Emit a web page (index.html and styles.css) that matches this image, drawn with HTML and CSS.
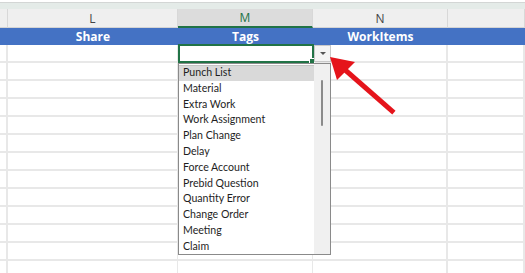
FILE: index.html
```html
<html>
  <head>
    <link rel="stylesheet" href="styles.css">
    <title>Tags dropdown</title>
  </head>
  <body>
    <div class="sheet">
      <div class="ribbon-edge"></div>

      <div class="row colheads">
        <div class="cell corner"></div>
        <div class="cell">L</div>
        <div class="cell active">M</div>
        <div class="cell">N</div>
        <div class="cell"></div>
      </div>

      <div class="row titles">
        <div class="cell"></div>
        <div class="cell">Share</div>
        <div class="cell">Tags</div>
        <div class="cell">WorkItems</div>
        <div class="cell"></div>
      </div>

      <div id="rows"></div>

      <!-- things that float over the grid -->
      <div class="selected"><span class="handle"></span></div>
      <div class="dd-button"><span class="caret"></span></div>

      <div class="dd-list">
        <ul>
          <li class="hover">Punch List</li>
          <li>Material</li>
          <li>Extra Work</li>
          <li>Work Assignment</li>
          <li>Plan Change</li>
          <li>Delay</li>
          <li>Force Account</li>
          <li>Prebid Question</li>
          <li>Quantity Error</li>
          <li>Change Order</li>
          <li>Meeting</li>
          <li>Claim</li>
        </ul>
        <div class="scroll"><span class="thumb"></span></div>
      </div>

      <svg class="pointer" width="80" height="70" viewBox="0 0 80 70">
        <line x1="14" y1="14" x2="62" y2="56" stroke="#e5141b" stroke-width="5" stroke-linecap="square"/>
        <polygon points="0,2 25,7 7,25" fill="#e5141b"/>
      </svg>
    </div>

    <script>
      const rows = document.querySelector('#rows');
      for (let i = 0; i < 13; i++) {
        const row = document.createElement('div');
        row.className = 'row data';
        for (let c = 0; c < 5; c++) {
          const cell = document.createElement('div');
          cell.className = 'cell';
          row.appendChild(cell);
        }
        rows.appendChild(row);
      }
    </script>
  </body>
</html>
```

FILE: styles.css
```css
body {
  margin: 0;
  font-family: "Open Sans", "Noto Sans", sans-serif;
  background: #fff;
  overflow: hidden;
}

.sheet {
  position: relative;
  width: 525px;
  height: 273px;
  overflow: hidden;
}

.ribbon-edge {
  height: 9px;
  box-sizing: border-box;
  border-top: 2px solid #fff;
  background: #e4ebe8;
  box-shadow: inset 0 1px 0 #d3d6d5;
}

.row {
  display: grid;
  grid-template-columns: 8px 170px 135px 135px 77px;
  height: 18px;
}

.cell {
  box-sizing: border-box;
  display: flex;
  align-items: center;
  justify-content: center;
}

.colheads {
  background: #efefef;
  font-size: 12px;
  color: #444;
}
.colheads .cell {
  border-right: 1px solid #d8d8d8;
  border-bottom: 1px solid #d4d4d4;
}
.colheads .cell.active {
  background: #dcdcdc;
  color: #217346;
  border-bottom: 2px solid #217346;
}

.titles {
  background: #4472c4;
  color: #fff;
  font-weight: bold;
  font-size: 12px;
}

.data .cell {
  border-bottom: 2px solid #e8e8e8;
  border-right: 2px solid #e8e8e8;
}
.data .cell:nth-child(2),
.data .cell:nth-child(3) {
  border-right-width: 1px;
}

.selected {
  position: absolute;
  left: 178px;
  top: 44px;
  width: 136px;
  height: 19px;
  box-sizing: border-box;
  border: 2px solid #217346;
  background: #fff;
}
.handle {
  position: absolute;
  right: -3px;
  bottom: -3px;
  width: 4px;
  height: 4px;
  background: #217346;
  border: 1px solid #fff;
}

.dd-button {
  position: absolute;
  left: 314px;
  top: 45px;
  width: 17px;
  height: 17px;
  box-sizing: border-box;
  border: 1px solid #c9c9c9;
  background: #f4f4f4;
  display: flex;
  align-items: center;
  justify-content: center;
}
.caret {
  width: 0;
  height: 0;
  border-left: 3px solid transparent;
  border-right: 3px solid transparent;
  border-top: 3px solid #555;
}

.dd-list {
  position: absolute;
  left: 178px;
  top: 63px;
  width: 153px;
  height: 192px;
  box-sizing: border-box;
  border: 1px solid #8a8a8a;
  background: #fff;
  display: flex;
}
.dd-list ul {
  list-style: none;
  margin: 0;
  padding: 1px 0 0 0;
  flex: 1;
  font-family: Lato, "Open Sans", sans-serif;
  font-size: 10.6px;
  color: #1e1e1e;
}
.dd-list li {
  height: 15.8px;
  line-height: 15.8px;
  padding-left: 4px;
}
.dd-list li.hover {
  background: #d9d9d9;
  box-shadow: inset 0 1px 0 #c4c4c4;
}
.scroll {
  width: 16px;
  background: #f0f0f0;
  position: relative;
}
.thumb {
  position: absolute;
  left: 7px;
  top: 16px;
  width: 2px;
  height: 46px;
  background: #8b8b8b;
  border-radius: 1px;
}

.pointer {
  position: absolute;
  left: 330px;
  top: 55px;
}
```
